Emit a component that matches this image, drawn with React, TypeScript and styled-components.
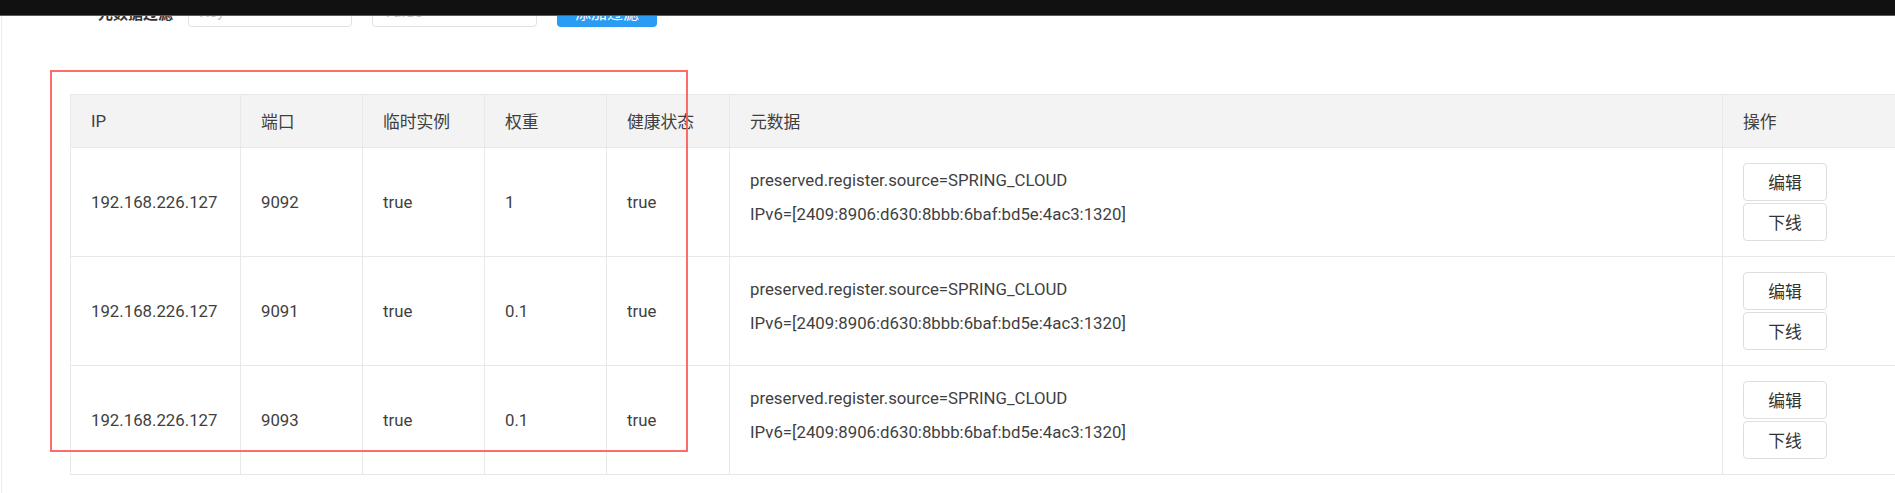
import React from "react";
import styled, { createGlobalStyle } from "styled-components";

const GlobalStyle = createGlobalStyle`
  html, body {
    margin: 0;
    padding: 0;
    background: #ffffff;
    overflow: hidden;
  }
  body {
    font-family: Roboto, "Noto Sans CJK SC", "Liberation Sans", sans-serif;
    color: #3d3d3d;
  }
  * { box-sizing: border-box; }
`;

const TopBar = styled.div`
  position: absolute;
  top: 0;
  left: 0;
  right: 0;
  height: 16px;
  background: #111111;
  border-bottom: 1px solid #5a5a5a;
  z-index: 10;
`;

const Page = styled.div`
  margin-left: 1px;
  border-left: 1px solid #ececec;
  height: 100vh;
  overflow: hidden;
`;

const FilterRow = styled.div`
  display: flex;
  align-items: center;
  margin-top: -11px;
  height: 38px;
`;

const FilterLabel = styled.label`
  width: 171px;
  text-align: right;
  margin-right: 15px;
  padding-top: 8px;
  font-size: 15px;
  font-weight: 700;
  color: #333;
`;

const FilterInput = styled.input<{ $w: number }>`
  width: ${(p) => p.$w}px;
  height: 38px;
  margin-right: 20px;
  border: 1px solid #e2e2e2;
  border-radius: 4px;
  padding: 7px 10px 0;
  font-family: inherit;
  font-size: 16px;
  color: #333;
  outline: none;
  &::placeholder {
    color: #c4c4c4;
  }
`;

const PrimaryButton = styled.button`
  width: 100px;
  height: 38px;
  border: none;
  border-radius: 4px;
  background: #2a9cf4;
  color: #ffffff;
  font-family: inherit;
  font-size: 16px;
  padding: 8px 0 0;
`;

const TableWrap = styled.div`
  position: relative;
  margin: 67px 0 0 68px;
  width: 1852px;
`;

const Annotation = styled.div`
  position: absolute;
  left: -20px;
  top: -24px;
  width: 638px;
  height: 382px;
  border: 2px solid rgba(255, 90, 90, 0.9);
  pointer-events: none;
  z-index: 5;
`;

const Table = styled.div`
  border-top: 1px solid #e8e8e8;
  border-left: 1px solid #e8e8e8;
`;

const Row = styled.div<{ $head?: boolean }>`
  display: grid;
  grid-template-columns: 170px 122px 122px 122px 123px 993px 200px;
  height: ${(p) => (p.$head ? 53 : 109)}px;
  background: ${(p) => (p.$head ? "#f3f3f3" : "#ffffff")};
`;

const Cell = styled.div`
  display: flex;
  flex-direction: column;
  justify-content: center;
  padding-left: 20px;
  border-right: 1px solid #e8e8e8;
  border-bottom: 1px solid #e8e8e8;
  font-size: 16.8px;
  color: #3f3f3f;
  white-space: nowrap;
`;

const MetaLine = styled.div`
  line-height: 25px;
  margin-bottom: 9px;
`;

const ActionCell = styled(Cell)`
  gap: 2px;
  align-items: flex-start;
`;

const ActionButton = styled.button`
  width: 84px;
  height: 38px;
  background: #ffffff;
  border: 1px solid #dedede;
  border-radius: 4px;
  font-family: inherit;
  font-size: 16.8px;
  color: #333;
  padding: 0;
`;

const headers = ["IP", "端口", "临时实例", "权重", "健康状态", "元数据", "操作"];

const rows = [
  { ip: "192.168.226.127", port: "9092", eph: "true", weight: "1", healthy: "true" },
  { ip: "192.168.226.127", port: "9091", eph: "true", weight: "0.1", healthy: "true" },
  { ip: "192.168.226.127", port: "9093", eph: "true", weight: "0.1", healthy: "true" },
];

const meta = [
  "preserved.register.source=SPRING_CLOUD",
  "IPv6=[2409:8906:d630:8bbb:6baf:bd5e:4ac3:1320]",
];

export default function App() {
  return (
    <>
      <GlobalStyle />
      <TopBar />
      <Page>
        <FilterRow>
          <FilterLabel>元数据过滤</FilterLabel>
          <FilterInput $w={164} placeholder="Key" />
          <FilterInput $w={165} placeholder="Value" />
          <PrimaryButton>添加过滤</PrimaryButton>
        </FilterRow>
        <TableWrap>
          <Annotation />
          <Table>
            <Row $head>
              {headers.map((h) => (
                <Cell key={h}>{h}</Cell>
              ))}
            </Row>
            {rows.map((r) => (
              <Row key={r.port}>
                <Cell>{r.ip}</Cell>
                <Cell>{r.port}</Cell>
                <Cell>{r.eph}</Cell>
                <Cell>{r.weight}</Cell>
                <Cell>{r.healthy}</Cell>
                <Cell>
                  {meta.map((m) => (
                    <MetaLine key={m}>{m}</MetaLine>
                  ))}
                </Cell>
                <ActionCell>
                  <ActionButton>编辑</ActionButton>
                  <ActionButton>下线</ActionButton>
                </ActionCell>
              </Row>
            ))}
          </Table>
        </TableWrap>
      </Page>
    </>
  );
}
